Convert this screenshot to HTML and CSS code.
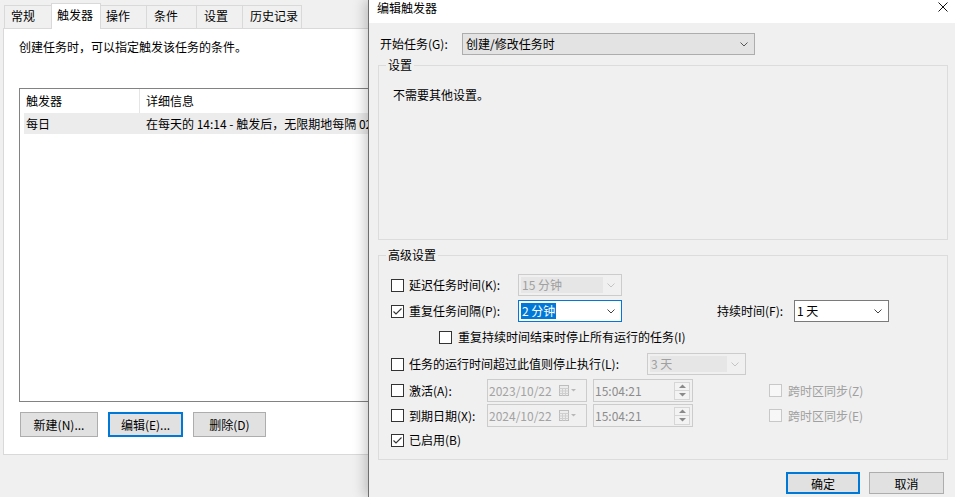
FILE: index.html
```html
<!DOCTYPE html>
<html lang="zh-CN">
<head>
    <meta charset="UTF-8">
    <title>编辑触发器</title>
    <link rel="stylesheet" href="styles.css">
</head>
<body>
    <!-- task properties window (behind) -->
    <div class="props">
        <div class="tabs">
            <div class="tab">常规</div>
            <div class="tab active">触发器</div>
            <div class="tab">操作</div>
            <div class="tab">条件</div>
            <div class="tab">设置</div>
            <div class="tab">历史记录</div>
        </div>
        <div class="tab-panel">
            <p class="hint">创建任务时，可以指定触发该任务的条件。</p>
            <div class="list">
                <div class="list-head">
                    <div class="col-type">触发器</div>
                    <div class="col-detail">详细信息</div>
                </div>
                <div class="list-row">
                    <div class="col-type">每日</div>
                    <div class="col-detail">在每天的 14:14 - 触发后，无限期地每隔 02 分钟 重复一次。</div>
                </div>
            </div>
            <div class="btn-row">
                <button class="btn btn-new">新建(N)...</button>
                <button class="btn btn-default btn-edit">编辑(E)...</button>
                <button class="btn btn-del">删除(D)</button>
            </div>
        </div>
    </div>

    <!-- edit trigger dialog -->
    <div class="dialog">
        <div class="titlebar">
            <span>编辑触发器</span>
            <svg class="close" width="10" height="10" viewBox="0 0 10 10"><path d="M0.5 0.5L9.5 9.5M9.5 0.5L0.5 9.5" stroke="#111" stroke-width="1"/></svg>
        </div>
        <div class="dialog-body">
            <div class="start-row">
                <span class="start-label">开始任务(G):</span>
                <div class="combo combo-list start-combo">
                    <span>创建/修改任务时</span>
                    <svg class="chevron" width="8" height="5" viewBox="0 0 8 5"><path d="M0.5 0.5L4 4L7.5 0.5" fill="none" stroke="#555"/></svg>
                </div>
            </div>

            <fieldset class="group group-settings">
                <legend>设置</legend>
                <div class="settings-body">不需要其他设置。</div>
            </fieldset>

            <fieldset class="group group-advanced">
                <legend>高级设置</legend>
                <div class="adv-body">
                    <div class="row">
                        <span class="check"></span>
                        <span class="opt-label w-delay">延迟任务时间(K):</span>
                        <div class="combo combo-disabled w-delay-combo">
                            <span class="combo-field">15 分钟</span>
                            <svg class="chevron" width="8" height="5" viewBox="0 0 8 5"><path d="M0.5 0.5L4 4L7.5 0.5" fill="none" stroke="#c4c4c4"/></svg>
                        </div>
                    </div>
                    <div class="row">
                        <span class="check checked"><svg width="11" height="11" viewBox="0 0 11 11"><path d="M1.5 5.5L4 8L9.5 2.5" fill="none" stroke="#333" stroke-width="1.1"/></svg></span>
                        <span class="opt-label w-delay">重复任务间隔(P):</span>
                        <div class="combo combo-focus w-delay-combo">
                            <span class="selected-text">2 分钟</span>
                            <svg class="chevron" width="8" height="5" viewBox="0 0 8 5"><path d="M0.5 0.5L4 4L7.5 0.5" fill="none" stroke="#444"/></svg>
                        </div>
                        <span class="duration-label">持续时间(F):</span>
                        <div class="combo combo-edit w-duration">
                            <span>1 天</span>
                            <svg class="chevron" width="8" height="5" viewBox="0 0 8 5"><path d="M0.5 0.5L4 4L7.5 0.5" fill="none" stroke="#444"/></svg>
                        </div>
                    </div>
                    <div class="row row-sub">
                        <span class="check"></span>
                        <span class="opt-label">重复持续时间结束时停止所有运行的任务(I)</span>
                    </div>
                    <div class="row row-stop">
                        <span class="check"></span>
                        <span class="opt-label w-stop">任务的运行时间超过此值则停止执行(L):</span>
                        <div class="combo combo-disabled w-stop-combo">
                            <span class="combo-field">3 天</span>
                            <svg class="chevron" width="8" height="5" viewBox="0 0 8 5"><path d="M0.5 0.5L4 4L7.5 0.5" fill="none" stroke="#c4c4c4"/></svg>
                        </div>
                    </div>
                    <div class="row row-date">
                        <span class="check"></span>
                        <span class="opt-label w-date">激活(A):</span>
                        <div class="date-box">
                            <span>2023/10/22</span>
                            <svg class="cal" width="18" height="11" viewBox="0 0 18 11"><rect x="0.5" y="0.5" width="9" height="10" fill="#ececec" stroke="#bdbdbd"/><path d="M0.5 3.5H9.5M0.5 6H9.5M0.5 8.5H9.5M3.5 3.5V10.5M6.5 3.5V10.5" stroke="#cfcfcf"/><path d="M12 4H17L14.5 6.5Z" fill="#b8b8b8"/></svg>
                        </div>
                        <div class="time-box">
                            <span>15:04:21</span>
                            <div class="spin">
                                <div class="spin-btn"><svg width="7" height="4" viewBox="0 0 7 4"><path d="M0 4H7L3.5 0.5Z" fill="#8a8a8a"/></svg></div>
                                <div class="spin-btn"><svg width="7" height="4" viewBox="0 0 7 4"><path d="M0 0H7L3.5 3.5Z" fill="#8a8a8a"/></svg></div>
                            </div>
                        </div>
                        <span class="check disabled sync-check"></span>
                        <span class="opt-label muted">跨时区同步(Z)</span>
                    </div>
                    <div class="row row-date row-expire">
                        <span class="check"></span>
                        <span class="opt-label w-date">到期日期(X):</span>
                        <div class="date-box">
                            <span>2024/10/22</span>
                            <svg class="cal" width="18" height="11" viewBox="0 0 18 11"><rect x="0.5" y="0.5" width="9" height="10" fill="#ececec" stroke="#bdbdbd"/><path d="M0.5 3.5H9.5M0.5 6H9.5M0.5 8.5H9.5M3.5 3.5V10.5M6.5 3.5V10.5" stroke="#cfcfcf"/><path d="M12 4H17L14.5 6.5Z" fill="#b8b8b8"/></svg>
                        </div>
                        <div class="time-box">
                            <span>15:04:21</span>
                            <div class="spin">
                                <div class="spin-btn"><svg width="7" height="4" viewBox="0 0 7 4"><path d="M0 4H7L3.5 0.5Z" fill="#8a8a8a"/></svg></div>
                                <div class="spin-btn"><svg width="7" height="4" viewBox="0 0 7 4"><path d="M0 0H7L3.5 3.5Z" fill="#8a8a8a"/></svg></div>
                            </div>
                        </div>
                        <span class="check disabled sync-check"></span>
                        <span class="opt-label muted">跨时区同步(E)</span>
                    </div>
                    <div class="row row-enabled">
                        <span class="check checked"><svg width="11" height="11" viewBox="0 0 11 11"><path d="M1.5 5.5L4 8L9.5 2.5" fill="none" stroke="#333" stroke-width="1.1"/></svg></span>
                        <span class="opt-label">已启用(B)</span>
                    </div>
                </div>
            </fieldset>

            <div class="dialog-buttons">
                <button class="btn btn-default btn-ok">确定</button>
                <button class="btn btn-cancel">取消</button>
            </div>
        </div>
    </div>
</body>
</html>
```

FILE: styles.css
```css
* {
    box-sizing: border-box;
}

body {
    margin: 0;
    width: 955px;
    height: 497px;
    overflow: hidden;
    position: relative;
    background-color: #f0f0f0;
    font-family: "Noto Sans CJK SC", sans-serif;
    font-size: 12px;
    line-height: 16px;
    color: #000;
}

/* ---- properties window ---- */

.tabs {
    display: flex;
    align-items: flex-end;
    height: 28px;
    padding-left: 4px;
}

.tab {
    height: 23px;
    border: 1px solid #d9d9d9;
    border-bottom: none;
    padding-left: 7px;
    line-height: 20px;
    background-color: #f0f0f0;
    white-space: nowrap;
}

.tab + .tab {
    border-left: none;
}

.tab:nth-child(1) { width: 49px; padding-left: 6px; }
.tab:nth-child(3) { width: 48px; }
.tab:nth-child(4) { width: 50px; }
.tab:nth-child(5) { width: 46px; }
.tab:nth-child(6) { width: 59px; }

.tab.active {
    position: relative;
    z-index: 1;
    width: 50px;
    height: 26px;
    margin: 0 -2px -1px;
    padding-left: 5px;
    line-height: 22px;
    border-left: 1px solid #d9d9d9;
    background-color: #fff;
}

.tab-panel {
    margin-left: 3px;
    height: 427px;
    background-color: #fff;
    border: 1px solid #d9d9d9;
    padding: 10px 0 0 15px;
}

.hint {
    margin: 0;
}

.list {
    margin-top: 33px;
    width: 620px;
    height: 314px;
    border: 1px solid #828282;
    background-color: #fff;
}

.list-head {
    display: flex;
    height: 24px;
    align-items: stretch;
}

.list-head .col-type {
    width: 119px;
    padding-left: 6px;
    line-height: 24px;
}

.list-head .col-detail {
    border-left: 1px solid #e5e5e5;
    padding-left: 6px;
    line-height: 24px;
}

.list-row {
    display: flex;
    margin-left: 4px;
    height: 21px;
    line-height: 21px;
    background-color: #ececec;
    white-space: nowrap;
}

.list-row .col-type {
    width: 115px;
    padding-left: 2px;
}

.list-row .col-detail {
    padding-left: 7px;
}

.btn-row {
    display: flex;
    gap: 10px;
    margin: 10px 0 0 1px;
}

.btn {
    height: 25px;
    padding: 0;
    font-family: inherit;
    font-size: 12px;
    color: #000;
    background-color: #e1e1e1;
    border: 1px solid #adadad;
}

.btn-default {
    border: 2px solid #0078d7;
}

.btn-new { width: 78px; }
.btn-edit { width: 75px; }
.btn-del { width: 73px; }

/* ---- edit trigger dialog ---- */

.dialog {
    position: absolute;
    top: 0;
    left: 368px;
    width: 587px;
    height: 497px;
    background-color: #f0f0f0;
    border-left: 1px solid #6e6e6e;
    box-shadow: -3px 0 12px rgba(0, 0, 0, 0.22);
}

.titlebar {
    display: flex;
    justify-content: space-between;
    align-items: flex-start;
    height: 23px;
    padding: 0 7px 0 8px;
    background-color: #fff;
}

.close {
    margin-top: 2px;
}

.dialog-body {
    padding: 0 7px 0 9px;
}

.start-row {
    display: flex;
    align-items: center;
    margin-top: 10px;
    height: 22px;
}

.start-label {
    width: 84px;
    padding-left: 2px;
}

.combo {
    display: flex;
    align-items: center;
    height: 22px;
    border: 1px solid #7a7a7a;
    background-color: #fff;
    white-space: nowrap;
}

.chevron {
    margin-left: auto;
    margin-right: 6px;
    flex-shrink: 0;
}

.combo-list {
    padding-left: 3px;
    background-color: #e3e3e3;
    border-color: #adadad;
}

.start-combo {
    width: 293px;
}

.combo-disabled {
    border-color: #cccccc;
    background-color: #f0f0f0;
    color: #a0a0a0;
    padding-left: 2px;
}

.combo-field {
    height: 16px;
    width: 82px;
    background-color: #e6e6e6;
    padding-left: 1px;
    line-height: 16px;
}

.combo-focus {
    border-color: #0078d7;
    padding-left: 2px;
}

.selected-text {
    background-color: #0078d7;
    color: #fff;
    padding: 0 1px;
}

.combo-edit {
    padding-left: 2px;
}

.w-delay-combo { width: 104px; }
.w-duration { width: 95px; }
.w-stop-combo { width: 99px; }
.w-stop-combo .combo-field { width: 77px; }

.group {
    margin: 0;
    padding: 0;
    min-width: 0;
    border: 1px solid #dcdcdc;
}

.group legend {
    margin-left: 7px;
    padding: 0 2px;
    line-height: 16px;
}

.group-settings {
    margin-top: 2px;
    height: 183px;
}

.settings-body {
    padding: 14px 0 0 14px;
}

.group-advanced {
    margin-top: 7px;
    height: 213px;
}

.adv-body {
    padding: 11px 0 0 12px;
}

.row {
    display: flex;
    align-items: center;
    height: 22px;
    white-space: nowrap;
}

.row + .row { margin-top: 4px; }
.row.row-stop { margin-top: 5px; }
.row.row-date { height: 23px; }
.row.row-expire { margin-top: 2px; }
.row.row-enabled { margin-top: 3px; height: 20px; }

.row-sub {
    padding-left: 48px;
}

.check {
    flex-shrink: 0;
    width: 13px;
    height: 13px;
    border: 1px solid #333;
    background-color: #fff;
    display: flex;
}

.check.disabled {
    border-color: #c8c8c8;
    background-color: #f7f7f7;
}

.opt-label {
    padding-left: 5px;
}

.row-sub .opt-label {
    padding-left: 6px;
}

.w-delay { width: 114px; }
.w-stop { width: 243px; }
.w-date { width: 83px; }

.duration-label {
    margin-left: 95px;
    width: 77px;
}

.muted {
    color: #a0a0a0;
    padding-left: 6px;
}

.date-box,
.time-box {
    display: flex;
    align-items: center;
    width: 100px;
    height: 23px;
    border: 1px solid #cccccc;
    background-color: #f0f0f0;
    color: #a3a3a3;
    padding-left: 1px;
}

.cal {
    margin-left: auto;
    margin-right: 9px;
}

.time-box {
    margin-left: 6px;
    color: #8c8c8c;
}

.spin {
    margin-left: auto;
    margin-right: 2px;
    display: flex;
    flex-direction: column;
}

.spin-btn {
    width: 16px;
    height: 9px;
    border: 1px solid #d6d6d6;
    background-color: #f3f3f3;
    display: flex;
    align-items: center;
    justify-content: center;
}

.spin-btn + .spin-btn {
    border-top: none;
}

.sync-check {
    margin-left: 76px;
}

.dialog-buttons {
    display: flex;
    justify-content: flex-end;
    gap: 9px;
    margin-top: 12px;
    padding-right: 4px;
}

.dialog-buttons .btn {
    height: 22px;
}

.btn-ok { width: 74px; }
.btn-cancel { width: 75px; }
```
